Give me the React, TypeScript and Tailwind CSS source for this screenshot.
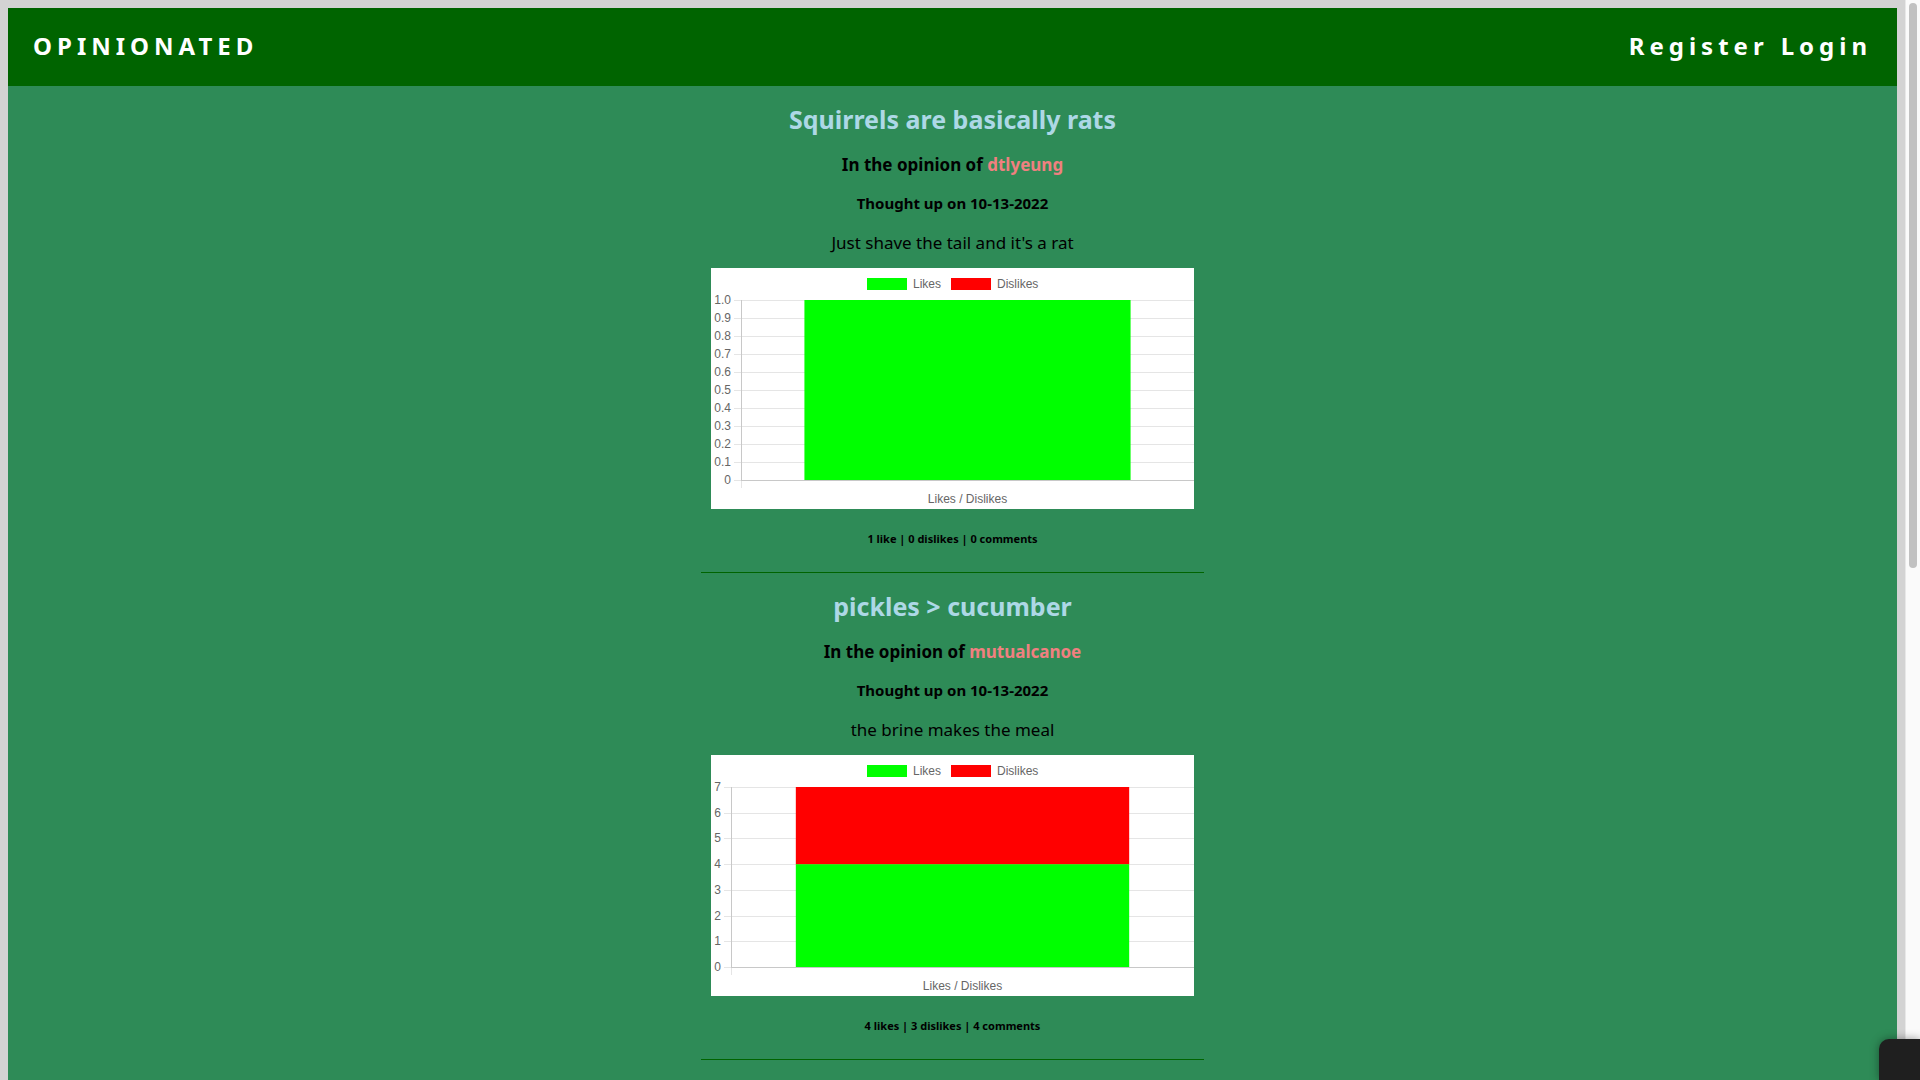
interface Post {
  title: string;
  author: string;
  date: string;
  body: string;
  likes: number;
  dislikes: number;
  comments: number;
  ticks: string[];
  axisX: number;
}

const posts: Post[] = [
  {
    title: 'Squirrels are basically rats',
    author: 'dtlyeung',
    date: '10-13-2022',
    body: "Just shave the tail and it's a rat",
    likes: 1,
    dislikes: 0,
    comments: 0,
    ticks: ['0', '0.1', '0.2', '0.3', '0.4', '0.5', '0.6', '0.7', '0.8', '0.9', '1.0'],
    axisX: 30,
  },
  {
    title: 'pickles > cucumber',
    author: 'mutualcanoe',
    date: '10-13-2022',
    body: 'the brine makes the meal',
    likes: 4,
    dislikes: 3,
    comments: 4,
    ticks: ['0', '1', '2', '3', '4', '5', '6', '7'],
    axisX: 20,
  },
];

const plural = (n: number, word: string) => `${n} ${word}${n === 1 ? '' : 's'}`;

const CHART_W = 483;
const CHART_H = 241;
const TOP = 32;
const BOTTOM = 212;

function VoteChart({ post }: { post: Post }) {
  const { likes, dislikes, ticks, axisX } = post;
  const total = likes + dislikes;
  const span = BOTTOM - TOP;
  const plotW = CHART_W - axisX;
  const barW = plotW * 0.72;
  const barX = axisX + (plotW - barW) / 2;
  const likeH = (likes / total) * span;
  const step = span / (ticks.length - 1);

  return (
    <svg
      viewBox={`0 0 ${CHART_W} ${CHART_H}`}
      role="img"
      aria-label="Likes and dislikes"
      className="block w-full bg-white font-['Liberation_Sans',sans-serif] text-[12px]"
    >
      <g fill="#666">
        <rect x="156" y="10" width="40" height="12" fill="#0f0" />
        <text x="202" y="20">Likes</text>
        <rect x="240" y="10" width="40" height="12" fill="#f00" />
        <text x="286" y="20">Dislikes</text>
      </g>
      {ticks.map((label, i) => {
        const y = Math.round(BOTTOM - i * step);
        return (
          <g key={label}>
            <line x1={axisX - 7} x2={CHART_W} y1={y + 0.5} y2={y + 0.5} stroke="#e5e5e5" />
            <text x={axisX - 10} y={y + 4} textAnchor="end" fill="#666">
              {label}
            </text>
          </g>
        );
      })}
      <line x1={axisX + 0.5} x2={axisX + 0.5} y1={BOTTOM} y2={BOTTOM + 8} stroke="#e5e5e5" />
      <rect x={barX} y={BOTTOM - likeH} width={barW} height={likeH} fill="#0f0" />
      <rect x={barX} y={TOP} width={barW} height={span - likeH} fill="#f00" />
      <line x1={axisX + 0.5} x2={axisX + 0.5} y1={TOP} y2={BOTTOM} stroke="#c8c8c8" />
      <line x1={axisX} x2={CHART_W} y1={BOTTOM + 0.5} y2={BOTTOM + 0.5} stroke="#c8c8c8" />
      <text x={axisX + plotW / 2} y={BOTTOM + 23} textAnchor="middle" fill="#666">
        Likes / Dislikes
      </text>
    </svg>
  );
}

function PostCard({ post }: { post: Post }) {
  return (
    <article className="w-full max-w-[503px] border-b border-[#006400] px-[10px] pt-[19px] pb-[25px] text-center text-black">
      <h2 className="text-[25px] leading-7 font-bold">
        <a href="#post" className="text-[#add8e6]">{post.title}</a>
      </h2>
      <h4 className="mt-[22px] text-[17px] leading-5 font-bold">
        In the opinion of <a href="#author" className="text-[#f08080]">{post.author}</a>
      </h4>
      <h5 className="mt-[18px] text-[15px] leading-5 font-bold">Thought up on {post.date}</h5>
      <p className="mt-5 mb-[15px] text-[17px] leading-5">{post.body}</p>
      <VoteChart post={post} />
      <h6 className="mt-[22px] text-[11px] leading-4 font-bold">
        {plural(post.likes, 'like')} | {plural(post.dislikes, 'dislike')} | {plural(post.comments, 'comment')}
      </h6>
    </article>
  );
}

export default function App() {
  return (
    <div className="relative flex h-screen overflow-hidden bg-[#d3d3d3] font-['Noto_Sans','Open_Sans',sans-serif]">
      <div className="mx-2 mt-2 min-w-0 flex-1 bg-[#2e8b57]">
        <header className="flex items-center justify-between bg-[#006400] px-[25px] pt-[19px] pb-[21px] text-[24px] leading-[38px] font-bold tracking-[5px] text-white">
          <a href="#home">OPINIONATED</a>
          <nav className="flex gap-3">
            <a href="#register">Register</a>
            <a href="#login">Login</a>
          </nav>
        </header>
        <main className="flex flex-col items-center">
          {posts.map((post) => (
            <PostCard key={post.title} post={post} />
          ))}
        </main>
      </div>
      <div className="flex w-[15px] justify-center border-l border-[#e8e8e8] bg-[#fafafa] pt-[3px]">
        <div className="h-[565px] w-2 rounded-full bg-[#c1c1c1]" />
      </div>
      <div className="absolute right-0 bottom-0 h-[41px] w-[41px] rounded-tl-[10px] bg-[#1f1f1f] shadow-[0_0_10px_rgba(0,0,0,0.4)]" />
    </div>
  );
}
